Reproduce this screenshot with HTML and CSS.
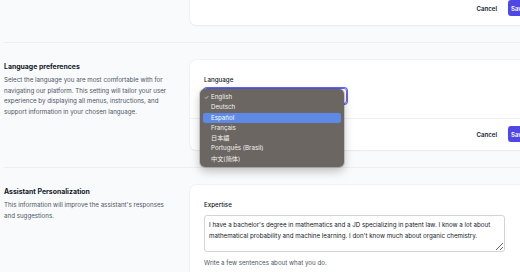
FILE: index.html
```html
<!DOCTYPE html>
<html lang="en">
<head>
    <meta charset="UTF-8">
    <meta name="viewport" content="width=device-width, initial-scale=1.0">
    <title>Settings</title>
    <link rel="stylesheet" href="styles.css">
</head>
<body>
<div class="page">
    <div class="section">
        <div></div>
        <div class="card card-cut">
            <div class="card-footer">
                <button class="btn-cancel">Cancel</button>
                <button class="btn-save">Save</button>
            </div>
        </div>
    </div>

    <div class="divider"></div>

    <div class="section">
        <div class="info">
            <h3>Language preferences</h3>
            <p>Select the language you are most comfortable with for navigating our platform. This setting will tailor your user experience by displaying all menus, instructions, and support information in your chosen language.</p>
        </div>
        <div class="card">
            <div class="card-body">
                <label class="field-label">Language</label>
                <div class="select-wrap">
                    <div class="select"></div>
                    <ul class="menu">
                        <li><span class="check">✓</span>English</li>
                        <li>Deutsch</li>
                        <li class="active">Español</li>
                        <li>Français</li>
                        <li>日本語</li>
                        <li>Português (Brasil)</li>
                        <li>中文(简体)</li>
                    </ul>
                </div>
            </div>
            <div class="card-footer">
                <button class="btn-cancel">Cancel</button>
                <button class="btn-save">Save</button>
            </div>
        </div>
    </div>

    <div class="divider"></div>

    <div class="section">
        <div class="info">
            <h3>Assistant Personalization</h3>
            <p>This information will improve the assistant's responses and suggestions.</p>
        </div>
        <div class="card">
            <div class="card-body">
                <label class="field-label" for="expertise">Expertise</label>
                <textarea id="expertise" class="textarea">I have a bachelor's degree in mathematics and a JD specializing in patent law. I know a lot about mathematical probability and machine learning. I don't know much about organic chemistry.</textarea>
                <p class="help">Write a few sentences about what you do.</p>
            </div>
        </div>
    </div>
</div>
</body>
</html>
```

FILE: styles.css
```css
body {
    margin: 0;
    background-color: #f9fafb;
    font-family: Inter, "Noto Sans CJK SC", sans-serif;
    color: #111827;
    overflow: hidden;
}

.page {
    width: 554px;
    padding-left: 4px;
}

.section {
    display: grid;
    grid-template-columns: 172px 1fr;
    gap: 14px;
}

.divider {
    height: 1px;
    background-color: #eceef1;
    margin: 17px 0;
}

.info {
    padding-top: 1px;
}

.info h3 {
    margin: 0;
    font-size: 6.9px;
    line-height: 11px;
    font-weight: 700;
}

.info p {
    margin: 3px 0 0;
    font-size: 6.2px;
    line-height: 10.6px;
    color: #4b5563;
}

.card {
    background-color: #fff;
    border-radius: 6px;
    box-shadow: 0 0 0 1px rgba(0, 0, 0, 0.03), 0 1px 2px rgba(0, 0, 0, 0.04);
}

.card-cut {
    border-radius: 0 0 6px 6px;
}

.card-body {
    padding: 15px 14px 14px;
}

.card-footer {
    display: flex;
    justify-content: flex-end;
    align-items: center;
    gap: 11px;
    padding: 7px 14px 8px;
    border-top: 1px solid #f0f1f3;
}

.card-cut .card-footer {
    border-top: none;
    padding: 0 14px 9px;
}

.btn-cancel {
    background: none;
    border: none;
    padding: 0;
    font-family: inherit;
    font-size: 6.1px;
    font-weight: 600;
    color: #111827;
}

.btn-save {
    width: 36px;
    height: 16px;
    padding: 0 3px;
    border: none;
    border-radius: 3px;
    background-color: #4f46e5;
    color: #fff;
    font-family: inherit;
    font-size: 6.1px;
    font-weight: 600;
    text-align: left;
}

.field-label {
    display: block;
    font-size: 6.2px;
    line-height: 10px;
    font-weight: 500;
    color: #111827;
}

.select-wrap {
    position: relative;
    margin-top: 3px;
    width: 143px;
}

.select {
    height: 14px;
    border: 1px solid #6366f1;
    border-radius: 3px;
    box-shadow: 0 0 0 1px #6366f1;
}

.menu {
    position: absolute;
    left: -4px;
    top: 1px;
    width: 138px;
    margin: 0;
    padding: 3px;
    list-style: none;
    background-color: #6b6661;
    border-radius: 5px;
    box-shadow: 0 0 0 1px rgba(0, 0, 0, 0.15), 0 4px 10px rgba(0, 0, 0, 0.25);
    font-size: 6.2px;
    color: #f3f3f3;
}

.menu li {
    position: relative;
    height: 10.3px;
    line-height: 10.3px;
    padding-left: 8px;
    border-radius: 2px;
}

.menu li.active {
    background-color: #5d8ae6;
    color: #fff;
}

.check {
    position: absolute;
    left: 1px;
    font-size: 5.6px;
}

.textarea {
    display: block;
    box-sizing: border-box;
    width: 301px;
    height: 37px;
    margin-top: 5px;
    padding: 3px 4px 2px;
    border: 1px solid #d1d5db;
    border-radius: 3px;
    font-family: inherit;
    font-size: 6.2px;
    line-height: 11px;
    color: #111827;
    resize: vertical;
}

.help {
    margin: 6px 0 0;
    font-size: 6.2px;
    line-height: 10px;
    color: #4b5563;
}
```
